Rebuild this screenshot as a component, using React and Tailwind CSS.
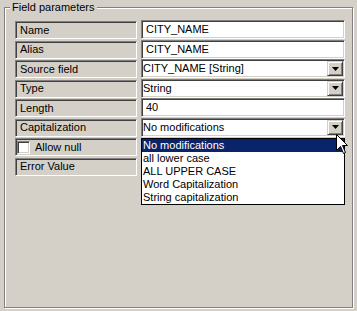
const sunken =
  "border border-t-[#808080] border-l-[#808080] border-b-white border-r-white shadow-[inset_1px_1px_0_#404040,inset_-1px_-1px_0_#d4d0c8]";

const raised =
  "border border-t-[#d4d0c8] border-l-[#d4d0c8] border-b-[#404040] border-r-[#404040] shadow-[inset_1px_1px_0_#ffffff,inset_-1px_-1px_0_#808080]";

const rows = [
  { label: "Name", value: "CITY_NAME", kind: "text" },
  { label: "Alias", value: "CITY_NAME", kind: "text" },
  { label: "Source field", value: "CITY_NAME [String]", kind: "combo" },
  { label: "Type", value: "String", kind: "combo" },
  { label: "Length", value: "40", kind: "text" },
  { label: "Capitalization", value: "No modifications", kind: "open" },
  { label: "Allow null", kind: "check" },
  { label: "Error Value", kind: "none" },
];

const options = [
  "No modifications",
  "all lower case",
  "ALL UPPER CASE",
  "Word Capitalization",
  "String capitalization",
];

function DropButton() {
  return (
    <div className={`${raised} w-[16px] h-[15px] bg-[#d4d0c8] flex items-center justify-center`}>
      <svg width="7" height="4" viewBox="0 0 7 4">
        <path d="M0 0H7L3.5 4Z" fill="#000" />
      </svg>
    </div>
  );
}

function Field({ row }) {
  if (row.kind === "text") {
    return (
      <div className={`${sunken} w-[204px] h-[19px] bg-white flex items-center pl-[4px]`}>
        {row.value}
      </div>
    );
  }
  if (row.kind === "combo" || row.kind === "open") {
    return (
      <div className={`${sunken} relative w-[204px] h-[19px] bg-white flex items-center justify-between pl-[1px] pr-[1px]`}>
        <span>{row.value}</span>
        <DropButton />
        {row.kind === "open" && (
          <div className="absolute left-[-1px] top-[19px] w-[204px] border border-black bg-white z-10">
            {options.map((opt, i) => (
              <div
                key={opt}
                className={`h-[13px] leading-[13px] pl-[1px] ${
                  i === 0 ? "bg-[#0a246a] text-white" : "text-black"
                }`}
              >
                {opt}
              </div>
            ))}
          </div>
        )}
      </div>
    );
  }
  return null;
}

export default function App() {
  return (
    <div className="relative w-[357px] h-[311px] bg-[#d4d0c8] font-['Liberation_Sans',Arial,sans-serif] text-[11px] text-black overflow-hidden pt-[7px] pl-[4px]">
      <div className="relative w-[349px] h-[301px] border border-[#808080] shadow-[inset_1px_1px_0_#ffffff,1px_1px_0_#ffffff] pt-[12px] pl-[10px]">
        <div className="absolute top-[-7px] left-[5px] px-[2px] bg-[#d4d0c8] leading-[13px]">
          Field parameters
        </div>
        <div className="flex flex-col gap-[0.5px]">
          {rows.map((row) => (
            <div key={row.label} className="flex h-[19px] gap-[4px]">
              <div
                className={`${sunken} mt-[1px] w-[122px] h-[18px] bg-[#d4d0c8] flex items-center ${
                  row.kind === "check" ? "pl-[1px]" : "pl-[4px]"
                }`}
              >
                {row.kind === "check" && (
                  <div className={`${sunken} w-[13px] h-[13px] bg-white mr-[5px]`} />
                )}
                {row.label}
              </div>
              <Field row={row} />
            </div>
          ))}
        </div>
      </div>
      <svg
        className="absolute left-[336px] top-[134px] z-20"
        width="13"
        height="21"
        viewBox="0 0 13 21"
      >
        <path
          d="M0.5 0.5V16.5L4.5 12.5L7.5 19.5L9.5 18.5L6.5 11.5H11.5Z"
          fill="#fff"
          stroke="#000"
          strokeWidth="1"
          strokeLinejoin="miter"
        />
      </svg>
    </div>
  );
}
